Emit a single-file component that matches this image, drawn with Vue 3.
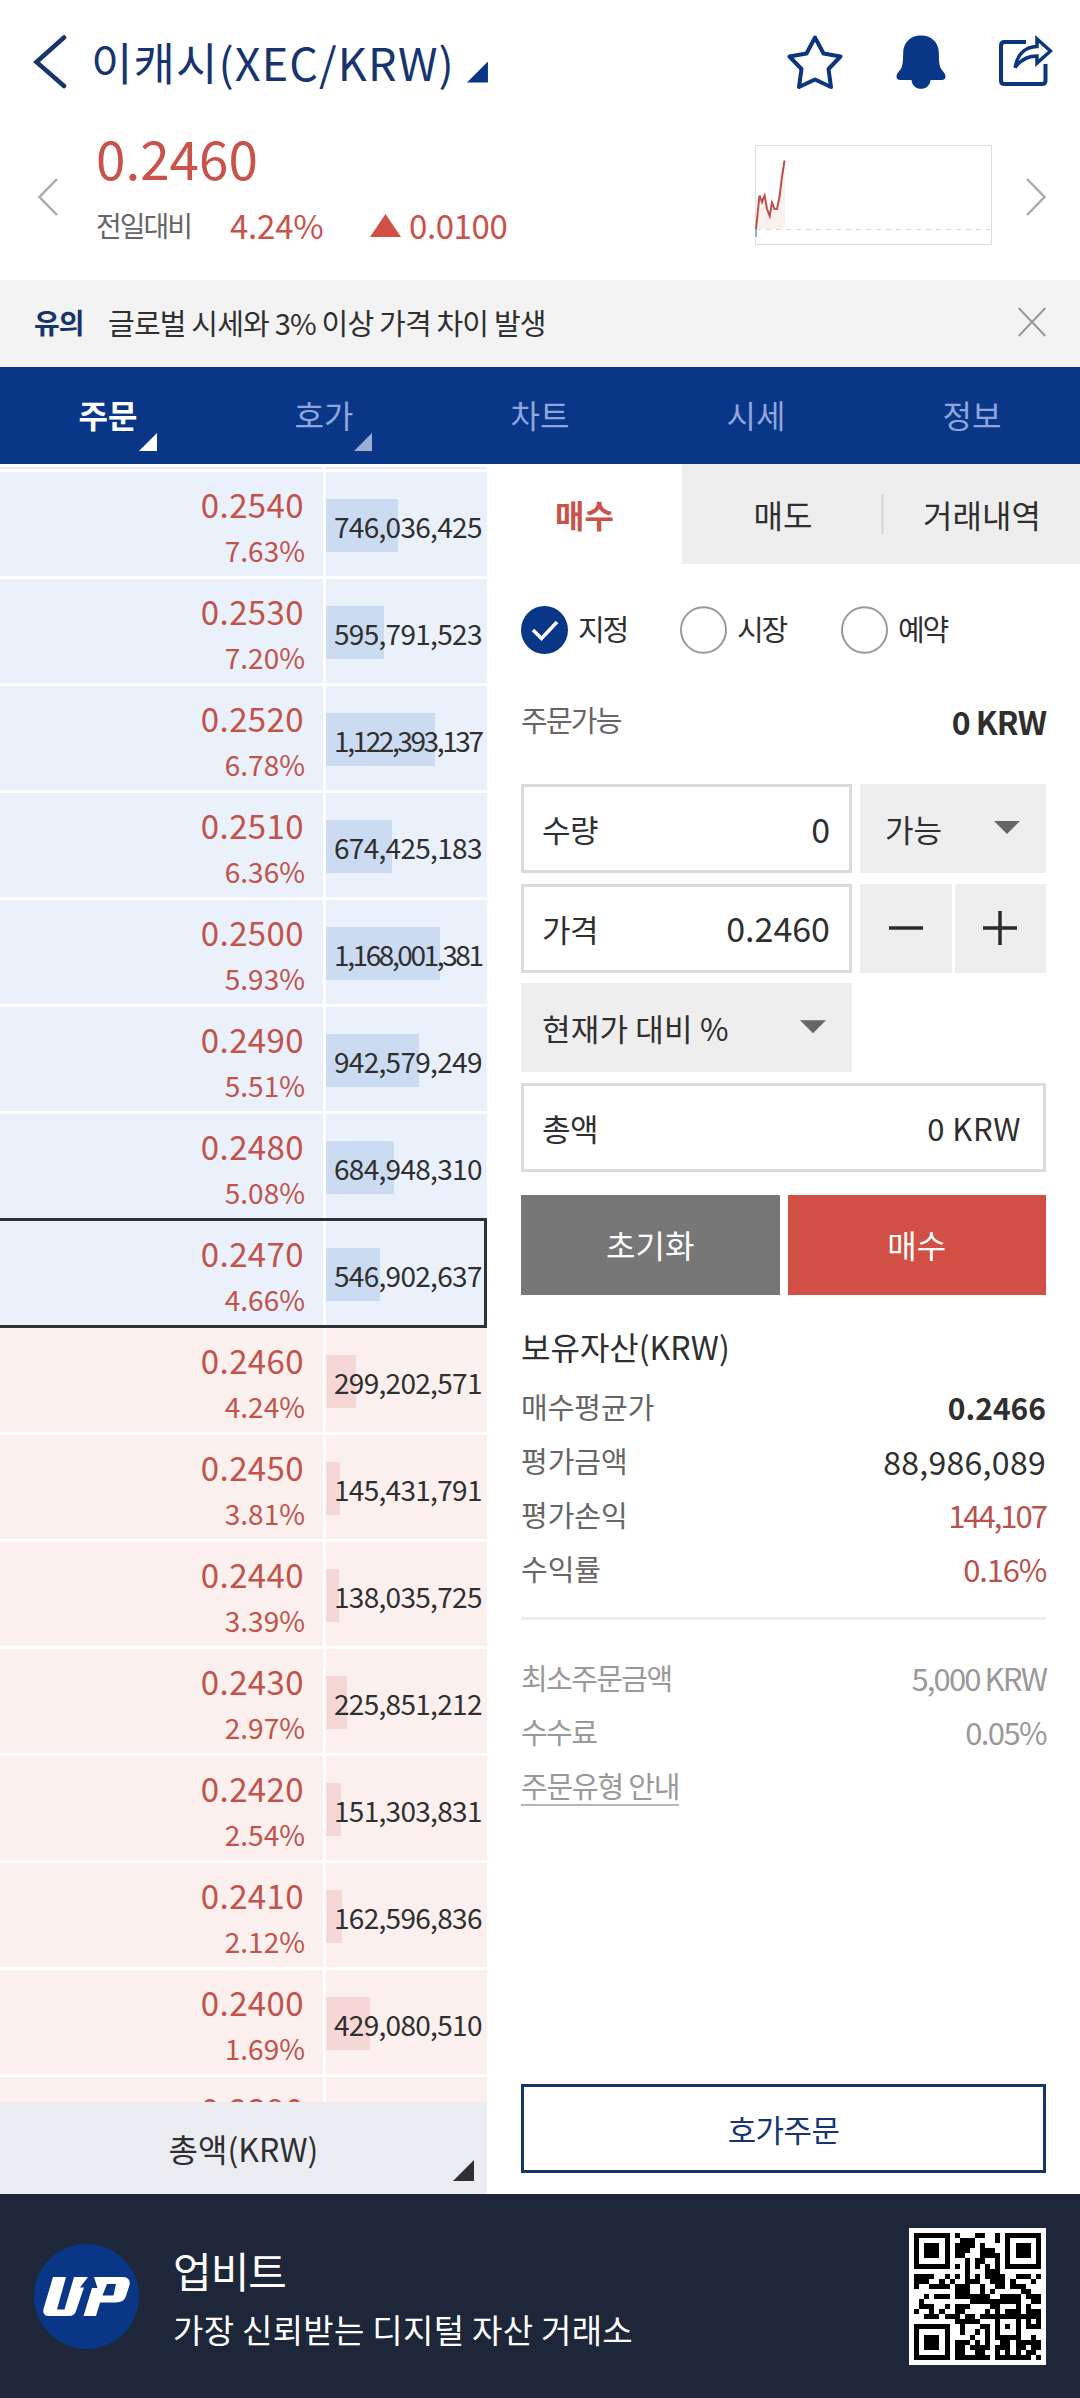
<script setup>
const tabs = [
  { label: '주문', active: true, corner: true },
  { label: '호가', corner: true },
  { label: '차트' },
  { label: '시세' },
  { label: '정보' },
]

const book = [
  { price: '0.2540', rate: '7.63%', qty: '746,036,425', bar: 72, side: 'ask' },
  { price: '0.2530', rate: '7.20%', qty: '595,791,523', bar: 58, side: 'ask' },
  { price: '0.2520', rate: '6.78%', qty: '1,122,393,137', bar: 109, side: 'ask', long: true },
  { price: '0.2510', rate: '6.36%', qty: '674,425,183', bar: 66, side: 'ask' },
  { price: '0.2500', rate: '5.93%', qty: '1,168,001,381', bar: 114, side: 'ask', long: true },
  { price: '0.2490', rate: '5.51%', qty: '942,579,249', bar: 93, side: 'ask' },
  { price: '0.2480', rate: '5.08%', qty: '684,948,310', bar: 68, side: 'ask' },
  { price: '0.2470', rate: '4.66%', qty: '546,902,637', bar: 54, side: 'ask', current: true },
  { price: '0.2460', rate: '4.24%', qty: '299,202,571', bar: 30, side: 'bid' },
  { price: '0.2450', rate: '3.81%', qty: '145,431,791', bar: 14, side: 'bid' },
  { price: '0.2440', rate: '3.39%', qty: '138,035,725', bar: 13, side: 'bid' },
  { price: '0.2430', rate: '2.97%', qty: '225,851,212', bar: 21, side: 'bid' },
  { price: '0.2420', rate: '2.54%', qty: '151,303,831', bar: 15, side: 'bid' },
  { price: '0.2410', rate: '2.12%', qty: '162,596,836', bar: 16, side: 'bid' },
  { price: '0.2400', rate: '1.69%', qty: '429,080,510', bar: 44, side: 'bid' },
  { price: '0.2390', rate: '', qty: '', bar: 0, side: 'bid' },
]

const orderTypes = [
  { label: '지정', checked: true },
  { label: '시장' },
  { label: '예약' },
]

const assets = [
  { label: '매수평균가', value: '0.2466', tone: 'strong' },
  { label: '평가금액', value: '88,986,089', tone: 'plain' },
  { label: '평가손익', value: '144,107', tone: 'up profit' },
  { label: '수익률', value: '0.16%', tone: 'up rate' },
]

const qrRows = [
  '1111111010001100101111111',
  '1000001001110000101000001',
  '1011101011110100001011101',
  '1011101011100111001011101',
  '1011101011000111101011101',
  '1000001000101100101000001',
  '1111111010101010101111111',
  '0000000000100011100000000',
  '1111001010101011110011101',
  '1110010100111001110100010',
  '1001111011100100110111000',
  '0000000011100101000001100',
  '0010111011111110011110111',
  '0100000000011111111110011',
  '0111001011100001100010100',
  '1001010011000010101110111',
  '0011101110110111111111111',
  '0000000011111000100010101',
  '1111111001000110101010111',
  '1000001001001010100010000',
  '1011101000010010111110010',
  '1011101011101010011011111',
  '1011101011011110111011011',
  '1000001011001100101010110',
  '1111111011111110111111101',
]
const qrPath = qrRows
  .flatMap((row, y) => [...row].map((c, x) => (c === '1' ? `M${x} ${y}h1v1h-1z` : '')))
  .join('')
</script>

<template>
  <div class="screen">
    <header class="top">
      <svg class="back" width="34" height="56" viewBox="0 0 34 56"><path d="M31 3.500L3.500 28L31 52" /></svg>
      <h1>이캐시(XEC/KRW)</h1>
      <i class="corner title-corner"></i>
      <div class="actions">
        <svg width="56" height="56" viewBox="0 0 56 56">
          <path class="line" d="M28 3.500L36.500 19.500L53.500 22.500L41.500 35L44 53L28 45.500L12 53L14.500 35L2.500 22.500L19.500 19.500Z" />
        </svg>
        <svg width="50" height="56" viewBox="0 0 50 56">
          <path class="solid" d="M25 1.500C14 1.500 7.500 9 7.200 18C7 27 7 32 4.500 35.500C2 38.500 .5 40 .5 42.500C.5 45 2 46 4.500 46H15.500C16 51.500 20 54.800 25 54.800S34 51.500 34.500 46H45.500C48 46 49.500 45 49.500 42.500C49.500 40 48 38.500 45.500 35.500C43 32 43 27 42.800 18C42.500 9 36 1.500 25 1.500Z" />
        </svg>
        <svg width="54" height="56" viewBox="0 0 54 56">
          <path class="line" d="M27 8H5.500Q2 8 2 11.500V46.500Q2 50 5.500 50H43Q46.500 50 46.500 46.500V30" />
          <path class="line thin" d="M38 5L51.500 17L38 29V22C28 22 21 26.500 16 33.500C18 21.500 25 13 38 12.500Z" />
        </svg>
      </div>
    </header>

    <section class="ticker">
      <svg width="20" height="38" viewBox="0 0 20 38"><path d="M19 1L1.500 19L19 37" /></svg>
      <div class="quote">
        <div class="price">0.2460</div>
        <div class="change">
          <span class="muted">전일대비</span>
          <span class="pct">4.24%</span>
          <svg width="31" height="23" viewBox="0 0 31 23"><path class="tri" d="M15.500 0L31 23H0Z" /></svg>
          <span class="diff">0.0100</span>
        </div>
      </div>
      <svg class="spark" width="237" height="100" viewBox="0 0 237 100">
        <rect x=".5" y=".5" width="236" height="99" class="frame" />
        <path class="area" d="M1 84L4 50L9 50L15 71L22 64L30 17V84Z" />
        <path class="dash" d="M1 84.500H235" />
        <path class="blue" d="M1 84V92" />
        <path class="red" d="M1 84L4.500 50.500L7 57L9.600 50.500L12 64L14.700 71L17 57.500L19.500 64L22 64L24.500 52L27 32L29.500 15.500" />
      </svg>
      <svg class="next" width="20" height="38" viewBox="0 0 20 38"><path d="M1 1L18.500 19L1 37" /></svg>
    </section>

    <section class="notice">
      <b>유의</b>
      <span>글로벌 시세와 3% 이상 가격 차이 발생</span>
      <svg width="28" height="30" viewBox="0 0 28 30"><path d="M.7 1L27.300 29M27.300 1L.7 29" /></svg>
    </section>

    <nav class="tabs">
      <div v-for="tab in tabs" :key="tab.label" class="tab" :class="{ active: tab.active }">
        <span>{{ tab.label }}</span>
        <i v-if="tab.corner" class="corner"></i>
      </div>
    </nav>

    <main class="content">
      <section class="book">
        <div class="rows">
          <div class="sliver"><span></span><span></span></div>
          <div v-for="row in book" :key="row.price" class="row" :class="[row.side, { current: row.current }]">
            <div class="cell quote-cell">
              <span class="p">{{ row.price }}</span>
              <span v-if="row.rate" class="r">{{ row.rate }}</span>
            </div>
            <div class="cell qty-cell" :class="{ long: row.long }">
              <i class="bar" :style="{ width: row.bar + 'px' }"></i>
              <span class="q">{{ row.qty }}</span>
            </div>
          </div>
        </div>
        <div class="book-total"><span>총액(KRW)</span><i class="corner"></i></div>
      </section>

      <section class="order">
        <div class="sides">
          <div class="side buy">매수</div>
          <div class="side sell">매도</div>
          <div class="side history">거래내역</div>
        </div>

        <div class="form">
          <div class="types">
            <label v-for="t in orderTypes" :key="t.label">
              <svg v-if="t.checked" width="47" height="48" viewBox="0 0 47 48">
                <ellipse cx="23.500" cy="24" rx="23.500" ry="24" class="disc" />
                <path d="M12 24L20.500 32.500L36 16" class="check" />
              </svg>
              <svg v-else width="47" height="48" viewBox="0 0 47 48"><ellipse cx="23.500" cy="24" rx="22.500" ry="22.800" class="ring" /></svg>
              <span>{{ t.label }}</span>
            </label>
          </div>

          <div class="available"><span>주문가능</span><b>0 KRW</b></div>

          <div class="field-row">
            <div class="field"><span>수량</span><span class="num">0</span></div>
            <div class="select"><span>가능</span><i class="caret"></i></div>
          </div>
          <div class="field-row">
            <div class="field"><span>가격</span><span class="num">0.2460</span></div>
            <div class="stepper">
              <button><svg width="34" height="34" viewBox="0 0 34 34"><path d="M0 17H34" /></svg></button>
              <button><svg width="34" height="34" viewBox="0 0 34 34"><path d="M0 17H34M17 0V34" /></svg></button>
            </div>
          </div>
          <div class="field-row">
            <div class="select wide"><span>현재가 대비 %</span><i class="caret"></i></div>
          </div>
          <div class="field-row">
            <div class="field full"><span>총액</span><span class="num krw">0 KRW</span></div>
          </div>

          <div class="buttons">
            <button class="reset">초기화</button>
            <button class="submit">매수</button>
          </div>

          <h2>보유자산(KRW)</h2>
          <dl class="assets">
            <div v-for="a in assets" :key="a.label">
              <dt>{{ a.label }}</dt>
              <dd :class="a.tone">{{ a.value }}</dd>
            </div>
          </dl>

          <dl class="rules">
            <div><dt>최소주문금액</dt><dd class="min">5,000 KRW</dd></div>
            <div><dt>수수료</dt><dd class="fee">0.05%</dd></div>
            <div><dt><a>주문유형 안내</a></dt></div>
          </dl>

          <button class="book-order">호가주문</button>
        </div>
      </section>
    </main>

    <footer class="brand">
      <svg class="logo" width="105" height="105" viewBox="0 0 105 105">
        <circle cx="52.500" cy="52.500" r="52.500" fill="#093687" />
        <path fill="#fff" d="M19 33H32L23 65.500H30.500L40 33H54L46 43.500H50L42 67Q40.500 72 35 72H15.500Q8 72 9.500 65Z" />
        <path fill="#fff" d="M60 33H88Q97 33 95.500 41L92 52Q90 58.500 82 58.500H66L62 72H49.500L58 44H63.500Z" />
        <path fill="#093687" d="M73 40H82L79.500 51.500H68.500Z" />
      </svg>
      <div class="brand-text">
        <div class="name">업비트</div>
        <div class="slogan">가장 신뢰받는 디지털 자산 거래소</div>
      </div>
      <svg class="qr" width="137" height="137" viewBox="-1 -1 27 27" shape-rendering="crispEdges">
        <rect x="-1" y="-1" width="27" height="27" fill="#fff" />
        <path :d="qrPath" fill="#000" />
      </svg>
    </footer>
  </div>
</template>

<style>
body { background: #fff; }
</style>

<style scoped>
* { box-sizing: border-box; margin: 0; padding: 0; }
.screen {
  width: 1080px;
  height: 2398px;
  display: flex;
  flex-direction: column;
  overflow: hidden;
  background: #fff;
  color: #2f2f2f;
  font-family: "Noto Sans CJK KR", "Noto Sans", sans-serif;
  line-height: 1;
  white-space: nowrap;
}
svg { display: block; flex: none; fill: none; }
button { border: 0; font: inherit; }
.corner { display: block; width: 21px; height: 21px; background: currentColor; clip-path: polygon(100% 0, 100% 100%, 0 100%); }

.top { height: 124px; flex: none; display: flex; align-items: center; padding: 0 27px 0 33px; color: #093687; }
.back path { stroke: #17346f; stroke-width: 4.5; stroke-linecap: round; }
h1 { margin: -2px 0 0 24px; font-size: 45px; font-weight: 400; letter-spacing: 1.1px; color: #17346f; }
.title-corner { margin: 20px 0 0 12px; }
.actions { margin-left: auto; display: flex; gap: 53px; }
.line { stroke: #0b357c; stroke-width: 4; stroke-linejoin: round; }
.thin { stroke-width: 3.5; stroke-linejoin: miter; }
.solid { fill: #093687; }

.ticker { height: 156px; flex: none; display: flex; align-items: flex-start; padding: 0 34px 0 38px; color: #c9524a; }
.ticker > svg:not(.spark) { margin-top: 54px; stroke: #aaa; stroke-width: 2.5; }
.quote { margin-left: 38px; width: 430px; }
.price { height: 72px; line-height: 66px; font-size: 53px; }
.change { display: flex; align-items: center; height: 60px; padding-bottom: 2px; }
.muted { width: 134px; color: #666; font-size: 28px; letter-spacing: -2px; }
.pct { width: 140px; font-size: 33px; letter-spacing: -.2px; }
.tri { fill: #d14f45; }
.diff { margin-left: 8px; font-size: 33px; letter-spacing: -.4px; }
.spark { margin: 21px 0 0 229px; }
.ticker > .next { margin-left: auto; }
.frame { stroke: #ddd; fill: #fff; }
.area { fill: #fdf1f0; }
.dash { stroke: #d9d9d9; stroke-dasharray: 5 5; }
.red { stroke: #bd5049; stroke-width: 2; }
.blue { stroke: #8fb2d0; stroke-width: 2; }

.notice { height: 87px; flex: none; display: flex; align-items: center; padding: 0 34px 3px 34px; background: #f3f3f3; font-size: 29px; }
.notice b { width: 74px; color: #17346f; font-size: 28px; letter-spacing: -1px; }
.notice span { letter-spacing: -.8px; }
.notice svg { margin-left: auto; stroke: #999; stroke-width: 2; }

.tabs { height: 97px; flex: none; display: flex; background: #093687; color: #8ea6db; font-size: 32px; }
.tab { position: relative; width: 216px; display: flex; align-items: center; justify-content: center; padding-bottom: 3px; }
.tab.active { color: #fff; font-weight: 700; }
.tab .corner { position: absolute; left: 139px; top: 66px; width: 18px; height: 18px; }
.tab:not(.active) .corner { left: 138px; color: #9caed6; }

.content { flex: 1; min-height: 0; display: flex; }
.book { width: 487px; display: flex; flex-direction: column; }
.rows { flex: 1; min-height: 0; overflow: hidden; }
.sliver { display: flex; gap: 3px; height: 8px; padding: 3px 0; }
.sliver span { background: #ececf0; }
.sliver span:first-child { width: 323px; }
.sliver span:last-child { width: 161px; }
.row { position: relative; display: flex; gap: 3px; height: 104px; margin-bottom: 3px; }
.row.current::after { content: ""; position: absolute; inset: -3px 0 -3px -3px; border: 3px solid #2f3234; }
.cell { background: #eaf1fb; }
.bid .cell { background: #fcf0ef; }
.quote-cell { width: 323px; display: flex; flex-direction: column; align-items: flex-end; padding: 16px 18px 0 0; color: #c2524a; }
.p { height: 33px; line-height: 33px; font-size: 33px; letter-spacing: .4px; margin-right: 1px; }
.r { margin-top: 15px; height: 28px; line-height: 28px; font-size: 28px; }
.qty-cell { position: relative; width: 161px; display: flex; align-items: center; padding-left: 8px; overflow: hidden; }
.bar { position: absolute; left: 0; top: 27px; height: 53px; background: #cbdbf1; }
.bid .bar { background: #f5d8d6; }
.q { position: relative; top: 2px; font-size: 28px; letter-spacing: -.7px; }
.long .q { letter-spacing: -2.4px; }
.book-total { position: relative; height: 92px; flex: none; display: flex; align-items: center; justify-content: center; background: #ecedf3; font-size: 32px; }
.book-total .corner { position: absolute; right: 13px; bottom: 13px; }

.order { flex: 1; display: flex; flex-direction: column; }
.sides { height: 100px; flex: none; display: flex; font-size: 32px; }
.side { display: flex; align-items: center; justify-content: center; background: #eee; }
.buy { width: 195px; background: #fff; color: #c9524a; font-weight: 700; }
.sell { position: relative; width: 202px; }
.sell::after { content: ""; position: absolute; right: 0; top: 30px; width: 3px; height: 40px; background: #dcdcdc; }
.history { flex: 1; }

.form { flex: 1; display: flex; flex-direction: column; padding: 42px 34px 21px; }
.types { display: flex; height: 48px; }
.types label { display: flex; align-items: center; width: 159px; font-size: 29px; letter-spacing: -2.2px; }
.types label:nth-child(2) { width: 161px; }
.types label span { margin: -3px 0 0 10px; }
.disc { fill: #093687; }
.check { stroke: #fff; stroke-width: 3.5; }
.ring { stroke: #999; stroke-width: 2; }

.available { margin-top: 35px; height: 60px; display: flex; justify-content: space-between; align-items: center; color: #666; font-size: 29px; letter-spacing: -1.8px; }
.available b { margin-top: 3px; color: #2f2f2f; font-size: 32px; letter-spacing: -1px; }
.types + .available + .field-row { margin-top: 35px; }

.field-row { display: flex; gap: 8px; height: 89px; margin-bottom: 10.6px; flex: none; font-size: 31px; }
.field { width: 331px; border: 3px solid #dadada; display: flex; justify-content: space-between; align-items: center; padding: 0 19px 0 18px; }
.field.full { width: 100%; padding-right: 22px; }
.field > span:first-child { letter-spacing: -.5px; }
.num { font-size: 34px; }
.num.krw { font-size: 31px; letter-spacing: .5px; }
.select { width: 186px; background: #eee; display: flex; justify-content: space-between; align-items: center; padding: 0 26px 0 25px; }
.select.wide { width: 331px; padding-left: 21px; letter-spacing: .2px; }
.caret { width: 26px; height: 13px; background: #666; clip-path: polygon(0 0, 100% 0, 50% 100%); margin-top: -2px; }
.stepper { display: flex; gap: 3px; width: 186px; }
.stepper button { flex: 1; background: #eee; display: flex; align-items: center; justify-content: center; }
.stepper path { stroke: #2b2b2b; stroke-width: 3.5; }

.buttons { margin-top: 12.6px; display: flex; gap: 8px; height: 100px; flex: none; color: #fff; font-size: 32px; }
.buttons button { flex: 1; color: #fff; padding-bottom: 1px; }
.reset { background: #777; }
.submit { background: #d14f45; }

h2 { margin-top: 32px; height: 40px; line-height: 38px; font-size: 32px; font-weight: 400; }
.assets { margin-top: 13px; padding-bottom: 21px; border-bottom: 3px solid #ededed; }
.assets > div, .rules > div { height: 54px; display: flex; justify-content: space-between; align-items: center; }
dt { color: #666; font-size: 29px; }
dd { font-size: 32px; }
.plain { letter-spacing: .3px; }
.strong { font-weight: 700; font-size: 30px; }
.up { color: #b9524b; font-size: 31px; }
.profit { letter-spacing: -2px; }
.rate { letter-spacing: -1.2px; }
.rules { margin-top: 31px; }
.rules dt { color: #999; letter-spacing: -1.6px; }
.rules dd { color: #999; font-size: 31px; }
.rules a { display: block; padding-bottom: 4px; margin-top: 6px; border-bottom: 2px solid #b5b5b5; letter-spacing: -1.2px; }
.min { letter-spacing: -1.9px; }
.fee { letter-spacing: -1.6px; }
.book-order { margin-top: auto; height: 89px; flex: none; border: 3px solid #17346b; background: #fff; color: #17346f; font-size: 31px; letter-spacing: -.6px; }

.brand { height: 204px; flex: none; display: flex; align-items: flex-start; padding: 34px 34px 0; background: #1d2739; color: #fff; }
.logo { margin-top: 16px; }
.brand-text { margin: 18px 0 0 34px; }
.name { height: 52px; line-height: 48px; font-size: 42px; letter-spacing: -1px; }
.slogan { margin-top: 12px; height: 40px; line-height: 38px; font-size: 33px; letter-spacing: .3px; }
.qr { margin-left: auto; }
</style>
